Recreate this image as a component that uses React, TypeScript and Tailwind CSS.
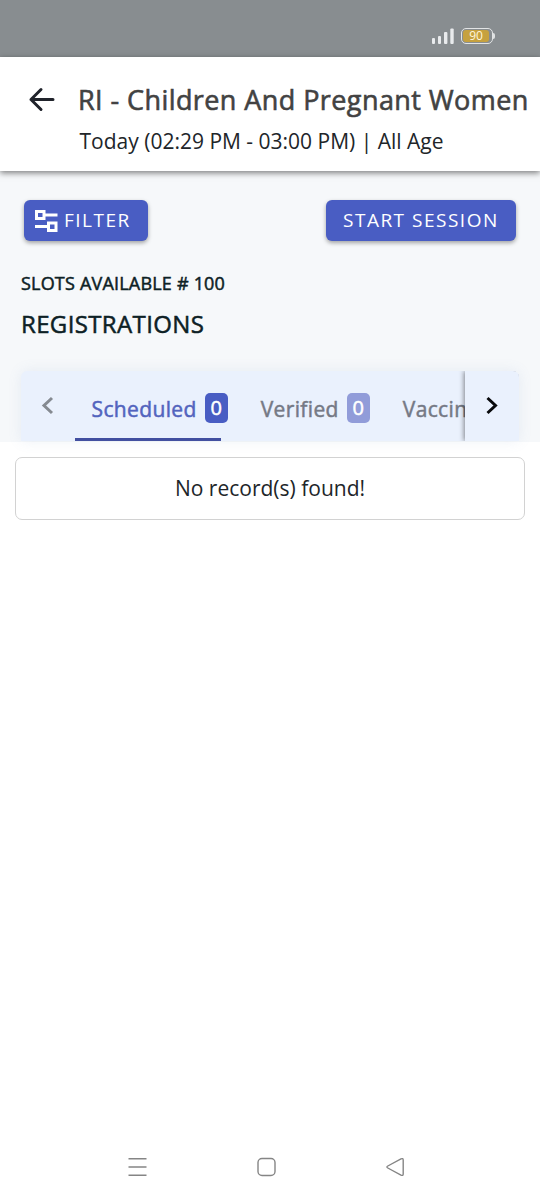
import type { ReactNode } from "react";

type Tab = { label: string; count?: number };

const tabs: Tab[] = [
  { label: "Scheduled", count: 0 },
  { label: "Verified", count: 0 },
  { label: "Vaccin" },
];

export default function App() {
  return (
    <div className="flex h-[1200px] w-[540px] flex-col overflow-hidden bg-white font-['Open_Sans',sans-serif] text-[#212529]">
      <StatusBar />
      <Header />

      <main className="flex-1">
        <section className="h-[271px] bg-[#f6f8fa] pt-[29px]">
          <div className="flex justify-between px-6">
            <Button className="w-[124px] pl-[10px]">
              <FilterIcon />
              <span className="ml-[6px] tracking-[1.5px]">FILTER</span>
            </Button>
            <Button className="w-[190px] pl-[17px]">
              <span className="tracking-[1.5px]">START SESSION</span>
            </Button>
          </div>
          <div className="px-[21px] text-[#0d2125] [-webkit-text-stroke:0.5px_currentColor]">
            <p className="mt-[30px] text-[18px] leading-6 tracking-[0.2px] whitespace-nowrap">SLOTS AVAILABLE # 100</p>
            <h2 className="mt-[12px] text-[24px] leading-[34px] tracking-[0.36px] whitespace-nowrap">REGISTRATIONS</h2>
          </div>
          <TabBar />
        </section>

        {/* list */}
        <section className="px-[15px] pt-[15px]">
          <div className="flex h-[63px] items-center justify-center rounded-[7px] border border-[#d2d2d2] text-[21px]">
            No record(s) found!
          </div>
        </section>
      </main>

      <NavBar />
    </div>
  );
}

function StatusBar() {
  return (
    <div className="flex h-[57px] shrink-0 items-start justify-end bg-[#888d90] pt-[27px] pr-[45px]">
      <svg width="23" height="18" viewBox="0 0 23 18" fill="#e9ebed">
        <rect x="0" y="11" width="3" height="6" rx="1" />
        <rect x="6" y="9" width="3" height="8" rx="1" />
        <rect x="12" y="5" width="3.4" height="12" rx="1" />
        <rect x="18.3" y="1.5" width="3.4" height="15.5" rx="1" />
      </svg>
      <div className="ml-[6px] flex items-center">
        <div className="mt-px flex h-4 w-8 rounded-[5px] border-[1.5px] border-[#e2e4e5] p-px">
          <span className="grid w-[26px] place-items-center rounded-[3px] bg-[#c6a13f] text-[12px] leading-none font-medium text-[#fff6dd]">90</span>
        </div>
        <span className="h-[6px] w-[2px] rounded-r bg-[#dfe1e2]" />
      </div>
    </div>
  );
}

function Header() {
  return (
    <header className="relative flex h-[114px] shrink-0 bg-white pt-[24px] pl-[28px] shadow-[0_2px_6px_rgba(0,0,0,0.5)]">
      <svg className="mt-[6px] shrink-0" width="28" height="26" viewBox="0 0 28 26" fill="none" stroke="#20232b" strokeWidth="3" strokeLinecap="round" strokeLinejoin="round">
        <path d="M25 12.5H3M13 2.5 3 12.5l10 10" />
      </svg>
      <div className="ml-[22px] whitespace-nowrap">
        <h1 className="text-[27px] leading-[38px] tracking-[0.42px] text-[#424242] [-webkit-text-stroke:0.6px_currentColor]">RI - Children And Pregnant Women</h1>
        <p className="mt-[8px] ml-[1.5px] text-[21px] leading-[28px]">Today (02:29 PM - 03:00 PM) | All Age</p>
      </div>
    </header>
  );
}

function Button({ className, children }: { className: string; children: ReactNode }) {
  return (
    <button className={`${className} flex h-[41px] items-center rounded-[6px] bg-[#495dc3] text-[19px] whitespace-nowrap text-white shadow-[0_2px_4px_rgba(0,0,0,0.35)]`}>
      {children}
    </button>
  );
}

function FilterIcon() {
  return (
    <svg width="24" height="24" viewBox="0 0 24 24" fill="none" stroke="white" strokeWidth="3">
      <rect x="2.5" y="2.5" width="7.5" height="7" />
      <path d="M10 6h13.500M1 17.500h13" />
      <rect x="14.500" y="14" width="7.500" height="7.500" />
    </svg>
  );
}

function TabBar() {
  return (
    <div className="mx-[21px] mt-[30px] flex h-[70px] overflow-hidden rounded-t-[6px] bg-[#eaf1fd] shadow-[0_0_14px_rgba(110,140,190,0.12)]">
      <div className="w-[54px] shrink-0 pt-[25px] pl-[20px]">
        <svg width="14" height="20" viewBox="0 0 14 20" fill="none" stroke="#858a91" strokeWidth="3">
          <path d="M11 2 3 9.5l8 7.5" />
        </svg>
      </div>
      <div className="flex w-[390px] shrink-0 overflow-hidden">
        {tabs.map((t, i) => (
          <TabItem key={t.label} tab={t} active={i === 0} />
        ))}
      </div>
      <div className="relative flex-1 bg-[#eaf1fd] pt-[25px] pl-[20px] shadow-[-1px_0_5px_rgba(0,0,0,0.45)]">
        <svg width="14" height="20" viewBox="0 0 14 20" fill="none" stroke="#08090c" strokeWidth="3">
          <path d="m2.500 2 8 7.500-8 7.500" />
        </svg>
      </div>
    </div>
  );
}

function TabItem({ tab, active }: { tab: Tab; active: boolean }) {
  return (
    <div className="flex shrink-0 flex-col justify-between text-[21px] [-webkit-text-stroke:0.5px_currentColor]">
      <div className={`mt-[22px] flex h-[32px] px-[16.5px] ${active ? "text-[#5264be]" : "text-[#757985]"}`}>
        <span className="leading-[32px] tracking-[0.36px]">{tab.label}</span>
        {tab.count !== undefined && (
          <span className={`ml-2 h-[30px] w-[23px] rounded-[5px] text-center text-[20px] leading-[30px] text-white ${active ? "bg-[#495dc3]" : "bg-[#919cd9]"}`}>
            {tab.count}
          </span>
        )}
      </div>
      {active && <span className="h-[3px] w-[146px] bg-[#424fa0]" />}
    </div>
  );
}

function NavBar() {
  return (
    <nav className="flex h-[66px] shrink-0 items-center pl-[127px]">
      <svg width="280" height="22" viewBox="0 0 280 22" fill="none" stroke="#858585" strokeWidth="1.4" strokeLinejoin="round">
        <path d="M1.500 2.700h18M1.500 11h18M1.500 19.300h18" />
        <rect x="131" y="2.500" width="17" height="17" rx="4" />
        <path d="M260.800 10 274 2.900q2.200-1 2.200 1.200v13.800q0 2.200-2.200 1.200L260.800 12q-1.800-1 0-2Z" />
      </svg>
    </nav>
  );
}
